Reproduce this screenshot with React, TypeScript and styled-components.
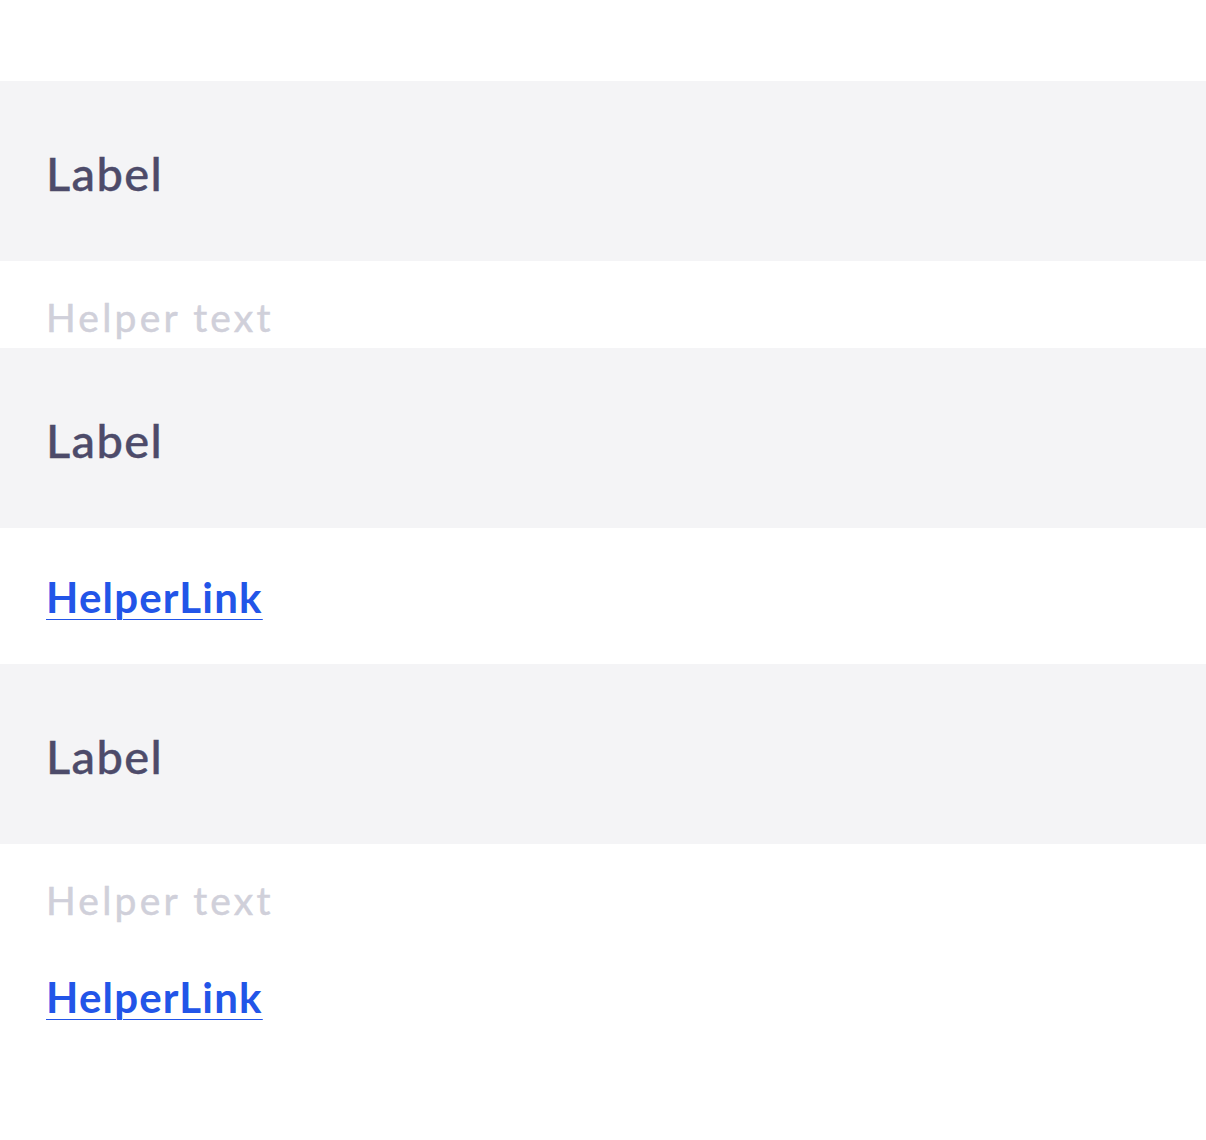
import React from "react";
import styled, { createGlobalStyle } from "styled-components";

const Global = createGlobalStyle`
  html, body { margin: 0; padding: 0; background: #ffffff; }
  body { font-family: "Lato", "Noto Sans", sans-serif; }
`;

const Page = styled.div`
  padding-top: 81px;
  display: flex;
  flex-direction: column;
`;

const Band = styled.div`
  height: 180px;
  box-sizing: border-box;
  background: #f4f4f6;
  padding: 4px 46px 0;
  display: flex;
  align-items: center;
`;

const Label = styled.span`
  font-size: 47px;
  line-height: 1;
  font-weight: 500;
  letter-spacing: 1.4px;
  color: #4d4b6a;
  -webkit-text-stroke: 0.4px #4d4b6a;
`;

const Helper = styled.div<{ $h: number; $clip?: boolean }>`
  height: ${(p) => p.$h}px;
  box-sizing: border-box;
  padding: 37px 46px 0;
  overflow: ${(p) => (p.$clip ? "hidden" : "visible")};
  font-size: 39px;
  line-height: 1;
  letter-spacing: 3.2px;
  color: #d0d0da;
  -webkit-text-stroke: 0.5px #d0d0da;
`;

const LinkRow = styled.div<{ $h: number }>`
  height: ${(p) => p.$h}px;
  box-sizing: border-box;
  padding: 48px 46px 0;
`;

const HelperLink = styled.a`
  font-size: 42px;
  line-height: 1;
  font-weight: 700;
  letter-spacing: 1.2px;
  color: #2255e8;
  text-decoration: underline;
  text-decoration-thickness: 1px;
  text-underline-offset: 6px;
`;

export default function App() {
  return (
    <>
      <Global />
      <Page>
        <Band>
          <Label>Label</Label>
        </Band>
        <Helper $h={87} $clip>
          Helper text
        </Helper>
        <Band>
          <Label>Label</Label>
        </Band>
        <LinkRow $h={136}>
          <HelperLink href="#">HelperLink</HelperLink>
        </LinkRow>
        <Band>
          <Label>Label</Label>
        </Band>
        <Helper $h={84}>Helper text</Helper>
        <LinkRow $h={100}>
          <HelperLink href="#">HelperLink</HelperLink>
        </LinkRow>
      </Page>
    </>
  );
}
